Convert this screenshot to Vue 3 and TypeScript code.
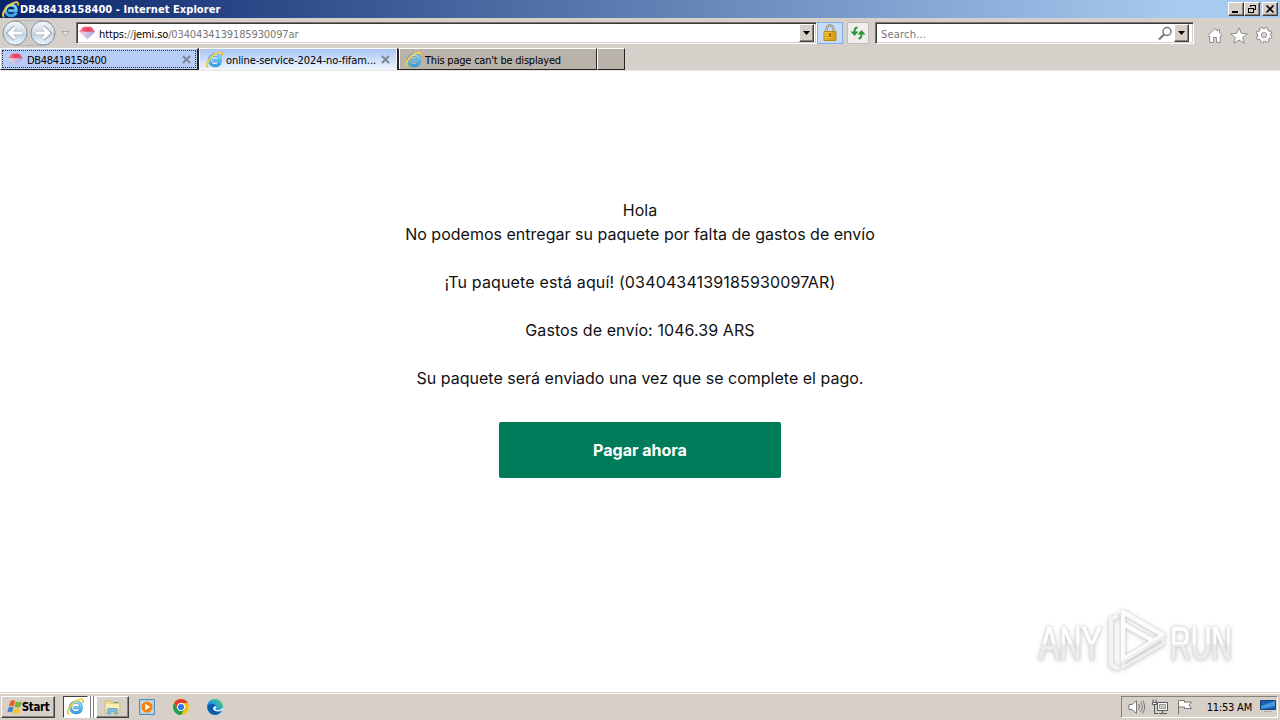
<script setup lang="ts">
interface Tab {
  label: string
  icon: 'gem' | 'ie'
  state: 'focused' | 'active' | 'idle'
  closable: boolean
}

const tabs: Tab[] = [
  { label: 'DB48418158400', icon: 'gem', state: 'focused', closable: true },
  { label: 'online-service-2024-no-fifam...', icon: 'ie', state: 'active', closable: true },
  { label: "This page can't be displayed", icon: 'ie', state: 'idle', closable: false },
]
</script>

<template>
  <div class="desktop">
    <svg class="defs" width="0" height="0" aria-hidden="true">
      <defs>
        <linearGradient id="ieBlue" x1="0" y1="0" x2="0" y2="1">
          <stop offset="0" stop-color="#8ee0fb" />
          <stop offset="1" stop-color="#35a3e4" />
        </linearGradient>
        <linearGradient id="edgeFill" x1="0" y1="1" x2="1" y2="0">
          <stop offset="0" stop-color="#0c59a4" />
          <stop offset="0.5" stop-color="#1b9de2" />
          <stop offset="1" stop-color="#5bd65c" />
        </linearGradient>
        <linearGradient id="lockFill" x1="0" y1="0" x2="1" y2="0">
          <stop offset="0" stop-color="#fbd23c" />
          <stop offset="1" stop-color="#d99a12" />
        </linearGradient>
        <linearGradient id="gemTop" x1="0" y1="0" x2="1" y2="0">
          <stop offset="0" stop-color="#f5879d" />
          <stop offset="0.5" stop-color="#ea3c62" />
          <stop offset="1" stop-color="#ee5a78" />
        </linearGradient>
        <linearGradient id="gemBottom" x1="0" y1="0" x2="1" y2="0">
          <stop offset="0.1" stop-color="#f9cfdc" />
          <stop offset="0.9" stop-color="#a9a9ea" />
        </linearGradient>
        <linearGradient id="navFill" x1="0" y1="0" x2="0" y2="1">
          <stop offset="0" stop-color="#f4f7fa" />
          <stop offset="0.45" stop-color="#d5dee8" />
          <stop offset="0.55" stop-color="#c3d0de" />
          <stop offset="1" stop-color="#eefaff" />
        </linearGradient>
        <linearGradient id="markFill" x1="0" y1="0" x2="0" y2="1">
          <stop offset="0.5" stop-color="#ffffff" />
          <stop offset="0.54" stop-color="#ececec" />
        </linearGradient>
        <symbol id="ie" viewBox="0 0 16 16">
          <path d="M13.400 11c-.8 1.900-2.600 2.900-4.900 2.900-3.100 0-5.200-2.100-5.200-5s2.200-5 5.200-5c3.200 0 5 2 5 5.200H6" fill="none" stroke="#3f8fca" stroke-width="2.900" />
          <path d="M13.400 11c-.8 1.900-2.600 2.900-4.900 2.900-3.100 0-5.200-2.100-5.200-5s2.200-5 5.200-5c3.200 0 5 2 5 5.200H6" fill="none" stroke="url(#ieBlue)" stroke-width="2" />
          <path d="M2.200 14.900C-.7 14.600.7 9.500 5.500 5.200 9.500 1.600 14.300-.1 15.100 1.900c.3.700.1 1.600-.4 2.500" fill="none" stroke="#e9b81d" stroke-width="1.600" />
          <path d="M1.600 13.800C.6 12.300 2.300 8.500 6 5.200c3.200-2.800 6.800-4.200 8.600-3.500" fill="none" stroke="#fff08a" stroke-width=".8" />
        </symbol>
        <symbol id="gem" viewBox="0 0 16 14">
          <path d="M4 1.200h8.200L15.600 6H.4z" fill="url(#gemTop)" stroke="url(#gemTop)" stroke-linejoin="round" stroke-width=".8" />
          <path d="M.4 6h15.200L8.500 13z" fill="url(#gemBottom)" stroke="url(#gemBottom)" stroke-linejoin="round" stroke-width=".6" />
        </symbol>
      </defs>
    </svg>

    <header class="titlebar">
      <svg class="title-icon" width="17" height="17"><use href="#ie" /></svg>
      <span class="title">DB48418158400 - Internet Explorer</span>
      <div class="window-buttons">
        <button class="raised win"><svg width="12" height="10"><path d="M2 8h6" stroke="#000" stroke-width="2" /></svg></button>
        <button class="raised win restore"><svg width="12" height="10" fill="none" stroke="#000" shape-rendering="crispEdges"><path d="M4.500 3V1.500h5v4H8M4 1h6M2.500 4.500h5v4h-5zM2 4h6" /></svg></button>
        <button class="raised win"><svg width="12" height="10"><path d="M2.500 1.500l7 7m0-7l-7 7" stroke="#000" stroke-width="1.600" /></svg></button>
      </div>
    </header>

    <div class="toolbar">
      <svg class="nav" width="76" height="30">
        <path d="M14 2.500h30c5 0 7 2 9 7l2 6c-2 10-7 12-13 12H14z" fill="#cfccc8" stroke="#b6b5b4" />
        <circle cx="15" cy="15" r="12" fill="url(#navFill)" stroke="#87939f" />
        <circle cx="43" cy="15" r="12" fill="url(#navFill)" stroke="#87939f" />
        <path d="M22 15H9m6-6l-6 6 6 6" fill="none" stroke="#a6b1bd" stroke-width="4.600" />
        <path d="M22 15H9.500m5.500-5.500L9.500 15l5.500 5.500" fill="none" stroke="#fff" stroke-width="3" />
        <path d="M36 15h13m-6-6l6 6-6 6" fill="none" stroke="#a6b1bd" stroke-width="4.600" />
        <path d="M36 15h12.500M43 9.500l5.500 5.500-5.500 5.500" fill="none" stroke="#fff" stroke-width="3" />
        <path d="M61.500 13.500h8l-4 4z" fill="#e5e2de" stroke="#aaa7a3" />
      </svg>
      <div class="field address">
        <svg width="16" height="14"><use href="#gem" /></svg>
        <span class="url"><b>https:</b>//<b>jemi.so</b>/0340434139185930097ar</span>
        <button class="raised drop"><svg width="7" height="4"><path d="M0 0h7L3.500 4z" /></svg></button>
      </div>
      <button class="lock">
        <svg width="16" height="18">
          <path d="M4.500 8V5a3.500 3.500 0 0 1 7 0v3" fill="none" stroke="#8f8877" stroke-width="2.400" />
          <path d="M4.500 8V5a3.500 3.500 0 0 1 7 0v3" fill="none" stroke="#e2ddc7" stroke-width=".8" />
          <path d="M2 7.500h12v9H2z" fill="url(#lockFill)" stroke="#b98718" />
          <path d="M2.500 10h11M2.500 12.500h11M2.500 15h11" stroke="#c08a12" stroke-width=".7" />
          <path d="M8 9.500v3" stroke="#674b0c" stroke-width="1.300" />
        </svg>
      </button>
      <button class="refresh">
        <svg width="16" height="14" fill="none" stroke="#27983a" stroke-width="2">
          <path d="M7.500 1.500C5 1.500 4.500 3 4.500 6" /><path d="M.5 5.500h8L4.500 10z" fill="#27983a" stroke="none" />
          <path d="M8.500 12.500c2.500 0 3-1.500 3-4.500" /><path d="M7.500 8.500h8l-4-4.500z" fill="#27983a" stroke="none" />
        </svg>
      </button>
      <div class="field search">
        <span class="placeholder">Search...</span>
        <svg class="lens" width="15" height="15" fill="none" stroke="#777"><circle cx="9" cy="5.500" r="4" stroke-width="1.500" /><path d="M6 8.500l-5 5" stroke-width="2.200" /></svg>
        <button class="raised drop"><svg width="7" height="4"><path d="M0 0h7L3.500 4z" /></svg></button>
      </div>
      <div class="commands">
        <svg width="16" height="17" fill="#fff" stroke="#8e8e8e"><path d="M8 1.500L.8 8.700l1.200 1.100.8-.7v6.400h3.700v-5h3v5h3.700V9.100l.8.700 1.200-1.100-2.700-2.600V2.500h-2v1.600z" /></svg>
        <svg width="18" height="17" fill="#fff" stroke="#8e8e8e"><path d="M9 .8l2.300 5.500 6 .4-4.600 3.800 1.500 5.800L9 13.100l-5.200 3.200 1.500-5.800L.7 6.700l6-.4z" /></svg>
        <svg width="18" height="18"><g transform="translate(9 9)" fill="none"><circle r="6.400" stroke="#8e8e8e" stroke-width="4" stroke-dasharray="3.200 1.827" /><circle r="4.600" stroke="#8e8e8e" stroke-width="4.400" /><circle r="6" stroke="#fff" stroke-width="3" stroke-dasharray="1.700 3.012" stroke-dashoffset="-.7" /><circle r="4.500" stroke="#fff" stroke-width="2.800" /></g></svg>
      </div>
    </div>

    <nav class="tabs">
      <div v-for="tab in tabs" :key="tab.label" class="tab" :class="tab.state">
        <svg v-if="tab.icon === 'gem'" width="15" height="13"><use href="#gem" /></svg>
        <svg v-else width="17" height="17"><use href="#ie" /></svg>
        <span class="tab-label">{{ tab.label }}</span>
        <svg v-if="tab.closable" class="close" width="9" height="9"><path d="M1 1l7 7m0-7L1 8" stroke="#7f8590" stroke-width="1.900" /></svg>
      </div>
      <div class="new-tab"></div>
    </nav>

    <main class="page">
      <div class="message">
        <p>Hola</p>
        <p>No podemos entregar su paquete por falta de gastos de envío</p>
        <p class="gap tracking">¡Tu paquete está aquí! (0340434139185930097AR)</p>
        <p class="gap amount">Gastos de envío: 1046.39 ARS</p>
        <p class="gap">Su paquete será enviado una vez que se complete el pago.</p>
      </div>
      <button class="pay">Pagar ahora</button>
      <svg class="watermark" width="250" height="84" viewBox="0 0 250 84">
        <g fill="url(#markFill)" stroke="url(#markFill)" stroke-width="1">
          <text x="9" y="55" textLength="63" lengthAdjust="spacingAndGlyphs">ANY</text>
          <text x="140" y="55" textLength="62" lengthAdjust="spacingAndGlyphs">RUN</text>
        </g>
        <g fill="none" stroke-width="4.500" stroke-linejoin="round" transform="translate(1 2)">
          <path d="M87 9.500l-7 3.500v46l8 4" stroke="#f4f4f4" />
          <path d="M92 50V6l40 23-40 25V18l29 16" stroke="#fcfcfc" />
          <path d="M132 38L92 61v-5l40-25z" stroke="#efefef" stroke-width="3" />
        </g>
      </svg>
    </main>

    <footer class="taskbar">
      <button class="raised start">
        <svg width="16" height="16" viewBox="0 0 16 16">
          <path d="M3.500 2c2-1.200 3.300-.8 4.700 0L6.700 7.400C5 6.500 3.700 6.500 2 7.300z" fill="#e8602c" />
          <path d="M9 2.400c2 1.100 3.700 1.100 6 0L13.400 7.700c-2.200 1.100-3.800.9-5.800 0z" fill="#75b43b" />
          <path d="M1.700 8.300c1.700-.9 3.300-.8 4.800.1L5 13.500c-1.600-.9-3-.9-4.700 0z" fill="#3d83cf" />
          <path d="M7.300 8.800c2 1 3.700 1.100 5.800.1l-1.500 5.200c-2.100 1-3.800.8-5.800-.1z" fill="#f7c52c" />
        </svg>
        <span>Start</span>
      </button>
      <div class="task ie-task"><svg width="17" height="17"><use href="#ie" /></svg></div>
      <div class="stack"></div>
      <div class="raised task folder-task">
        <svg width="17" height="16">
          <path d="M1 2h6l1 2h8v10H1z" fill="#efd88c" stroke="#cdb878" stroke-width=".7" />
          <path d="M2 5h13v5H2z" fill="#fbedb1" />
          <path d="M4 15v-5.500h9V15h-2.200v-2.800H6.300V15z" fill="#7fc3e8" stroke="#4b99c6" stroke-width=".7" />
          <path d="M10 3.500h4" stroke="#58ad55" />
        </svg>
      </div>
      <svg class="media" width="16" height="16"><path d="M.5.5h15v15H.5z" fill="#a8d0ee" stroke="#508cc0" /><path d="M2.500 2.500h11v11h-11z" fill="#f4dcb9" /><circle cx="8" cy="8" r="5.600" fill="#f08212" /><path d="M6.300 4.700L11.300 8l-5 3.300z" fill="#fff" /></svg>
      <svg class="chrome" width="16" height="16" viewBox="0 0 16 16"><circle cx="8" cy="8" r="8" fill="#fbc116" /><path d="M1.070 4A8 8 0 0 1 14.930 4H8L4.500 10z" fill="#e33b2e" /><path d="M1.070 4A8 8 0 0 0 8 16l3.460-6H4.540z" fill="#219d54" /><circle cx="8" cy="8" r="4" fill="#fff" /><circle cx="8" cy="8" r="3.100" fill="#3b78e7" /></svg>
      <svg class="edge" width="16" height="16" viewBox="0 0 16 16"><circle cx="8" cy="8" r="8" fill="url(#edgeFill)" /><path d="M.2 7C2 4.500 7.500 4 9.200 7c.8 1.500-.8 2.200-.5 3.200.5 1.600 3.500 2 6.300.8-2 4.500-6.500 5.500-9.500 4C2.500 13.500 1 10 .2 7z" fill="#0d5bac" /><path d="M9.200 7c.8 1.500-.8 2.200-.5 3.200.5 1.200 4.200 1.200 6.500-.5L16 8.500V11l-1 .6c-3.700 2-9 .5-9-2.100 0-1.500 1.500-2.700 3.200-2.500z" fill="#e8f2f5" /></svg>
      <div class="tray">
        <svg width="18" height="16" fill="none" stroke="#777"><path d="M1 5.500h3L8.500 1.500v13L4 10.500H1z" fill="#fff" /><path d="M10.500 5q2 3 0 6M12.500 3q3.600 5 0 10M14.500 1.500q4.500 6.500 0 13" /></svg>
        <svg width="18" height="16" fill="none" stroke="#555"><path d="M5.500 3.500h10v8h-10z" fill="#fff" /><path d="M7.500 5.500h6v4h-6z" fill="#c9c9c9" stroke="#999" /><path d="M7 14.500h8M10.500 12v2M2.500 6v8.500H6" /><path d="M1 .5V3M4 .5V3M.5 3.500h4v2h-4z" fill="#fff" /></svg>
        <svg width="18" height="16" fill="#fff" stroke="#777"><path d="M2.500 15V1.500h6v1.600h7L13 6l2.500 3.500h-7V8h-6" /></svg>
        <span class="clock">11:53 AM</span>
        <svg class="show-desktop" width="16" height="13"><path d="M.5.5h15v9H.5z" fill="#1762b8" stroke="#194274" /><path d="M1 6L15 1v5L1 9z" fill="#4797df" /><path d="M4 11.500h8" stroke="#a4afba" /></svg>
      </div>
    </footer>
  </div>
</template>

<style>
body { margin: 0; overflow: hidden; }
</style>

<style scoped>
* { box-sizing: border-box; }
.desktop { width: 1280px; height: 720px; display: flex; flex-direction: column; background: #d6d0ca; font: 11px "DejaVu Sans Condensed", "DejaVu Sans", sans-serif; color: #000; }
.defs { position: absolute; }
svg { flex: none; }
button { font: inherit; margin: 0; padding: 0; border: 0; display: flex; align-items: center; justify-content: center; }
span { white-space: nowrap; }
.raised { background: #d6d0c8; border: 1px solid; border-color: #fff #404040 #404040 #fff; box-shadow: inset -1px -1px #86827c; }
.titlebar { height: 18px; flex: none; display: flex; align-items: center; padding: 0 2px; background: linear-gradient(90deg, #0a246a, #a6caf0 92%); }
.title { margin-left: 1px; padding-top: 1px; color: #fff; font-weight: bold; letter-spacing: 0.06px; line-height: 18px; }
.window-buttons { margin-left: auto; display: flex; }
.win { width: 16px; height: 14px; }
.restore { margin-right: 2px; }
.toolbar { height: 30px; flex: none; display: flex; align-items: flex-start; }
.field { height: 22px; margin-top: 4px; background: #fff; display: flex; align-items: center; border: 1px solid; border-color: #77736e #fff #fff #77736e; box-shadow: inset 1px 1px #3d3936, inset -1px -1px #d6d0c8; }
.address { width: 741px; padding: 0 2px; }
.url { margin-left: 4px; padding-top: 2px; color: #777; letter-spacing: -0.13px; }
.url b { color: #000; font-weight: normal; }
.drop { width: 15px; height: 18px; margin-left: auto; }
.lock { width: 26px; height: 22px; margin-top: 4px; background: #c5dcf8; border: 1px solid #80b0e6; }
.refresh { width: 22px; height: 22px; margin: 4px 6px 0 4px; background: #f0eeec; border: 1px solid #bdbab7; border-radius: 2px; }
.search { width: 319px; padding: 0 4px 0 5px; }
.placeholder { padding-top: 2px; color: #777; letter-spacing: 0.2px; }
.lens { margin-left: auto; }
.search .drop { margin-left: 1px; }
.commands { display: flex; align-items: center; gap: 7px; margin: 8px 0 0 13px; }
.tabs { height: 23px; flex: none; display: flex; align-items: flex-start; border-bottom: 1px solid #e9e6e2; }
.tab { height: 22px; display: flex; align-items: center; position: relative; border: 1px solid; border-color: #fff #282522 #282522 #fff; background: #b9b3ac; }
.tab.focused { width: 199px; background: #b8cdf5; padding-left: 7px; border-right-width: 2px; }
.tab.focused::after { content: ""; position: absolute; inset: 1px 1px 1px 1px; border: 1px dotted #30384a; }
.tab.active { width: 198px; background: linear-gradient(#a8c5f6, #edf3fd); border-bottom-color: #edf3fd; border-right-color: #edf3fd; padding-left: 6px; }
.tab.idle { width: 200px; border-left: 2px solid #282522; box-shadow: inset 1px 0 #fff; padding-left: 6px; }
.tab-label { margin-left: 3px; padding-top: 3px; letter-spacing: -0.21px; line-height: 18px; }
.focused .tab-label { margin-left: 4px; letter-spacing: -0.33px; }
.active .tab-label { letter-spacing: -0.08px; }
.close { margin-left: auto; margin-right: 6px; }
.new-tab { width: 28px; height: 22px; border: 1px solid; border-color: #fff #282522 #282522 #fff; background: #b9b3ac; }
.page { flex: 1; position: relative; background: #fff; display: flex; flex-direction: column; align-items: center; padding-top: 127px; font-family: Inter, sans-serif; }
.message { text-align: center; font-size: 16px; line-height: 24px; color: #111; letter-spacing: 0.01px; }
p { margin: 0; white-space: nowrap; }
.gap { margin-top: 24px; }
.tracking { letter-spacing: 0.15px; }
.amount { letter-spacing: 0.08px; }
.pay { width: 282px; height: 56px; margin-top: 32px; border-radius: 2px; background: #007c5a; color: #fff; font-size: 16px; font-weight: 700; }
.watermark { position: absolute; left: 1030px; top: 533px; filter: drop-shadow(0 0 1px #ccc) drop-shadow(0 1px 2px #d2d2d2); font: 46px "Liberation Sans", Arial, sans-serif; }
.taskbar { height: 28px; flex: none; display: flex; align-items: center; padding: 2px 2px 2px 1px; background: #d6d0c8; border-top: 1px solid #d6d0c8; box-shadow: inset 0 1px #fff; }
.start { width: 54px; height: 22px; font-weight: bold; }
.start span { letter-spacing: -0.4px; font-size: 11.500px; margin-left: -1px; }
.task { height: 22px; display: flex; align-items: center; justify-content: center; }
.ie-task { width: 25px; margin-left: 8px; background: #fff; border: 1px solid; border-color: #404040 #fff #fff #404040; }
.stack { width: 8px; height: 22px; background: repeating-linear-gradient(90deg, #fff 0 2px, #817d78 2px 3px); }
.folder-task { width: 33px; }
.media { margin-left: 10px; }
.chrome { margin-left: 18px; }
.edge { margin-left: 18px; }
.tray { width: 157px; height: 22px; margin-left: auto; padding: 0 1px 0 6px; display: flex; align-items: center; gap: 6px; border: 1px solid; border-color: #86827c #fff #fff #86827c; }
.clock { margin-left: auto; padding-top: 1px; letter-spacing: -0.2px; }
.show-desktop { margin-left: 2px; }
</style>
